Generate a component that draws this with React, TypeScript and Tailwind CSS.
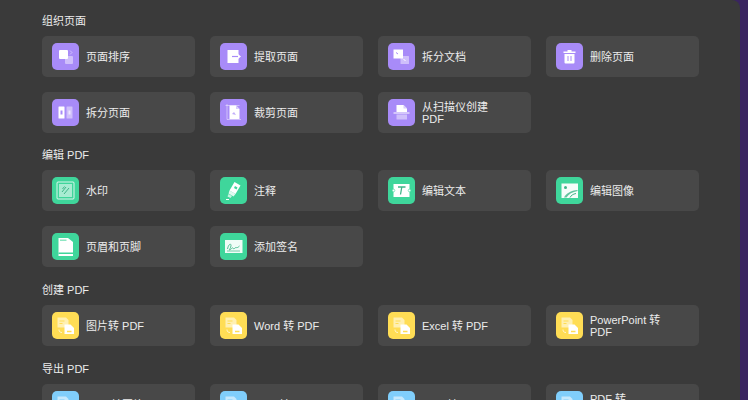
import { ReactNode } from 'react';

const purple = 'bg-[#a88bf8]';
const green = 'bg-[#3fd69b]';
const yellow = 'bg-[#ffdd55]';
const blue = 'bg-[#80cefb]';

const W = '#ffffff';
const S = 'rgba(255,255,255,.45)';

function Reorder() {
  return (
    <>
      <rect x="7" y="7" width="9" height="9" rx="1" fill={W} />
      <rect x="13" y="13" width="8" height="8" rx="1" fill={S} />
      <path d="M18 7.500l2 2-2 2" fill="none" stroke={S} strokeWidth="1" />
    </>
  );
}

function Extract() {
  return (
    <>
      <path d="M7.500 7h11v13h-11z" fill={W} />
      <path d="M12 13.500h7" stroke="#a88bf8" strokeWidth="1.200" />
      <path d="M18 11l3 2.500-3 2.500z" fill={W} />
    </>
  );
}

function SplitDoc() {
  return (
    <>
      <rect x="5.500" y="6.500" width="9.500" height="9" fill={W} />
      <path d="M8 9.500l2 1.500" stroke="#a88bf8" strokeWidth="1" />
      <rect x="12.500" y="13" width="8.500" height="8" rx=".5" fill={S} />
      <path d="M15.500 16l2 2" stroke={W} strokeWidth="1" />
    </>
  );
}

function Trash() {
  return (
    <>
      <path d="M11.500 7h4v1.500h4v1.500h-12v-1.500h4z" fill={W} />
      <path d="M8.500 11h10v8.500a1 1 0 0 1-1 1h-8a1 1 0 0 1-1-1z" fill={W} />
      <path d="M12 13v5M15 13v5" stroke="#a88bf8" strokeWidth="1" />
    </>
  );
}

function SplitPage() {
  return (
    <>
      <rect x="6.500" y="7.500" width="6" height="12" rx=".5" fill={W} />
      <rect x="14.500" y="7.500" width="6" height="12" rx=".5" fill={S} />
      <path d="M8.500 11.500h2v4h-2z" fill="#a88bf8" />
      <path d="M16.500 11.500h2v4h-2z" fill={W} fillOpacity=".6" />
    </>
  );
}

function Crop() {
  return (
    <>
      <path d="M9.500 6.500h6.500l3.500 3.500v10h-10z" fill={W} />
      <path d="M16 6.500v3.500h3.500" fill="#d8cbfc" />
      <path d="M12 15l2-2 2 3z" fill="#a88bf8" fillOpacity=".7" />
      <path d="M7 5v15.500h14M5.500 6.500h14" stroke={S} strokeWidth="1" fill="none" />
    </>
  );
}

function Scan() {
  return (
    <>
      <path d="M8.500 6h7l3.500 3.500v3.500h-10.500z" fill={W} />
      <path d="M15.500 6v3.500h3.500" fill="#d8cbfc" />
      <path d="M5.500 14h16" stroke={W} strokeWidth="1" />
      <path d="M8.500 15.500h10.500v5h-10.500z" fill={S} />
    </>
  );
}

function Watermark() {
  return (
    <>
      <rect x="5" y="5" width="17" height="17" rx="1" fill="none" stroke="rgba(255,255,255,.8)" strokeWidth="1" />
      <rect x="7" y="7" width="13" height="13" fill="rgba(255,255,255,.55)" />
      <path d="M10 15l4-5M12 17l5-6M10.500 12l2-2.500" stroke="#3fb588" strokeWidth="1" />
    </>
  );
}

function Marker() {
  return (
    <>
      <path d="M14.500 5l6 3.500-5 8.500-6-3.500z" fill={W} />
      <path d="M9.500 13.500l6 3.500-2 2.500-5-3z" fill={W} fillOpacity=".85" />
      <path d="M8.500 17l3.500 2-1.500 2-3-1.500z" fill={W} fillOpacity=".7" />
      <path d="M15 9l2.500 1.500-1 2-2.500-1.500z" fill="#3fd69b" />
      <path d="M6 22.500h3" stroke={W} strokeWidth="1" />
    </>
  );
}

function EditText() {
  return (
    <>
      <rect x="5.500" y="7" width="16" height="13" fill={W} />
      <circle cx="5.500" cy="13.500" r="1.300" fill={W} stroke="#3fd69b" strokeWidth=".6" />
      <circle cx="21.500" cy="13.500" r="1.300" fill={W} stroke="#3fd69b" strokeWidth=".6" />
      <path d="M10 10h7.500M13.800 10l-1.300 7.500" stroke="#3fb588" strokeWidth="1.300" fill="none" />
    </>
  );
}

function EditImage() {
  return (
    <>
      <rect x="5.500" y="6.500" width="16.500" height="14.500" fill="rgba(255,255,255,.95)" />
      <circle cx="9.500" cy="10.500" r="1.500" fill="#3fb588" />
      <path d="M8 20.500c2-4 7-7 13.500-7.500v1c-5 1-9 3-11 6.500z" fill="#3fb588" fillOpacity=".8" />
      <path d="M14 20.500c1-2 3-3.500 6-4" stroke="#3fb588" strokeWidth="1" fill="none" />
    </>
  );
}

function HeaderFooter() {
  return (
    <>
      <path d="M6.500 5h9.500l5 4v14h-14.500z" fill={W} />
      <path d="M8 6.500h6.500v1.500h-6.500z" fill="#8fe6c3" />
      <path d="M6.500 19.500h14.500v1.500h-14.500z" fill="#3fd69b" />
    </>
  );
}

function Signature() {
  return (
    <>
      <rect x="5" y="7" width="17.500" height="13" fill="rgba(255,255,255,.92)" />
      <path d="M7.500 16c1-5 3.500-6 3.500-3.500s-2 4-1.500 4.500 3-3 3.500-2 1 1 2 0 1.500 0 2.500-.5 1.500-1 2-1.500" fill="none" stroke="#3fb588" strokeWidth=".9" />
      <path d="M7 18h13" stroke="#3fb588" strokeWidth=".7" />
    </>
  );
}

function Convert({ tint }: { tint: string }) {
  return (
    <>
      <path d="M5.500 5.500h8.500l2.500 2.500v7.500h-11z" fill="rgba(255,255,255,.55)" />
      <path d="M7.500 9h5M7.500 11.500h3" stroke={tint} strokeWidth="1" />
      <path d="M12.500 12.500h6l3.500 3.500v6h-9.500z" fill={W} />
      <path d="M15 19.500h4.500" stroke={tint} strokeWidth="1.500" />
      <path d="M7 17.500c0 2 1 3 3 3" fill="none" stroke="rgba(255,255,255,.7)" strokeWidth="1" />
    </>
  );
}

function Tile({ color, children }: { color: string; children: ReactNode }) {
  return (
    <div className={`h-[27px] w-[27px] shrink-0 rounded-[5px] ${color}`}>
      <svg width="27" height="27" viewBox="0 0 27 27">
        {children}
      </svg>
    </div>
  );
}

type Item = { label: string; icon: ReactNode };

function Section({ title, color, items, className }: { title: string; color: string; items: Item[]; className: string }) {
  return (
    <section className={className}>
      <h2 className="mb-[8px] h-[16px] pt-[1px] text-[11px] leading-[16px] font-normal text-[#ececec]">{title}</h2>
      <div className="grid w-[657px] grid-cols-[repeat(4,153px)] gap-x-[15px] gap-y-[15px]">
        {items.map((item) => (
          <div key={item.label} className="flex h-[41px] items-center gap-[7px] rounded-[5px] bg-[#484848] pl-[10px] pr-[30px]">
            <Tile color={color}>{item.icon}</Tile>
            <span className="pt-[1px] text-[11px] leading-[12.500px] text-[#ececec]">{item.label}</span>
          </div>
        ))}
      </div>
    </section>
  );
}

export default function App() {
  return (
    <main
      className="h-[400px] w-[748px] overflow-hidden bg-[#3a2560]"
      style={{ fontFamily: '"Liberation Sans", "Noto Sans CJK SC", sans-serif' }}
    >
      <div className="h-[400px] w-[740px] rounded-tr-[8px] bg-[#3a3a3a] pl-[42px] pt-[12px]">
        <Section
          title="组织页面"
          color={purple}
          className=""
          items={[
            { label: '页面排序', icon: <Reorder /> },
            { label: '提取页面', icon: <Extract /> },
            { label: '拆分文档', icon: <SplitDoc /> },
            { label: '删除页面', icon: <Trash /> },
            { label: '拆分页面', icon: <SplitPage /> },
            { label: '裁剪页面', icon: <Crop /> },
            { label: '从扫描仪创建 PDF', icon: <Scan /> },
          ]}
        />
        <Section
          title="编辑 PDF"
          color={green}
          className="mt-[13px]"
          items={[
            { label: '水印', icon: <Watermark /> },
            { label: '注释', icon: <Marker /> },
            { label: '编辑文本', icon: <EditText /> },
            { label: '编辑图像', icon: <EditImage /> },
            { label: '页眉和页脚', icon: <HeaderFooter /> },
            { label: '添加签名', icon: <Signature /> },
          ]}
        />
        <Section
          title="创建 PDF"
          color={yellow}
          className="mt-[14px]"
          items={[
            { label: '图片转 PDF', icon: <Convert tint="#ffdd55" /> },
            { label: 'Word 转 PDF', icon: <Convert tint="#ffdd55" /> },
            { label: 'Excel 转 PDF', icon: <Convert tint="#ffdd55" /> },
            { label: 'PowerPoint 转 PDF', icon: <Convert tint="#ffdd55" /> },
          ]}
        />
        <Section
          title="导出 PDF"
          color={blue}
          className="mt-[14px]"
          items={[
            { label: 'PDF 转图片', icon: <Convert tint="#80cefb" /> },
            { label: 'PDF 转 Word', icon: <Convert tint="#80cefb" /> },
            { label: 'PDF 转 Excel', icon: <Convert tint="#80cefb" /> },
            { label: 'PDF 转 PowerPoint', icon: <Convert tint="#80cefb" /> },
          ]}
        />
      </div>
    </main>
  );
}
